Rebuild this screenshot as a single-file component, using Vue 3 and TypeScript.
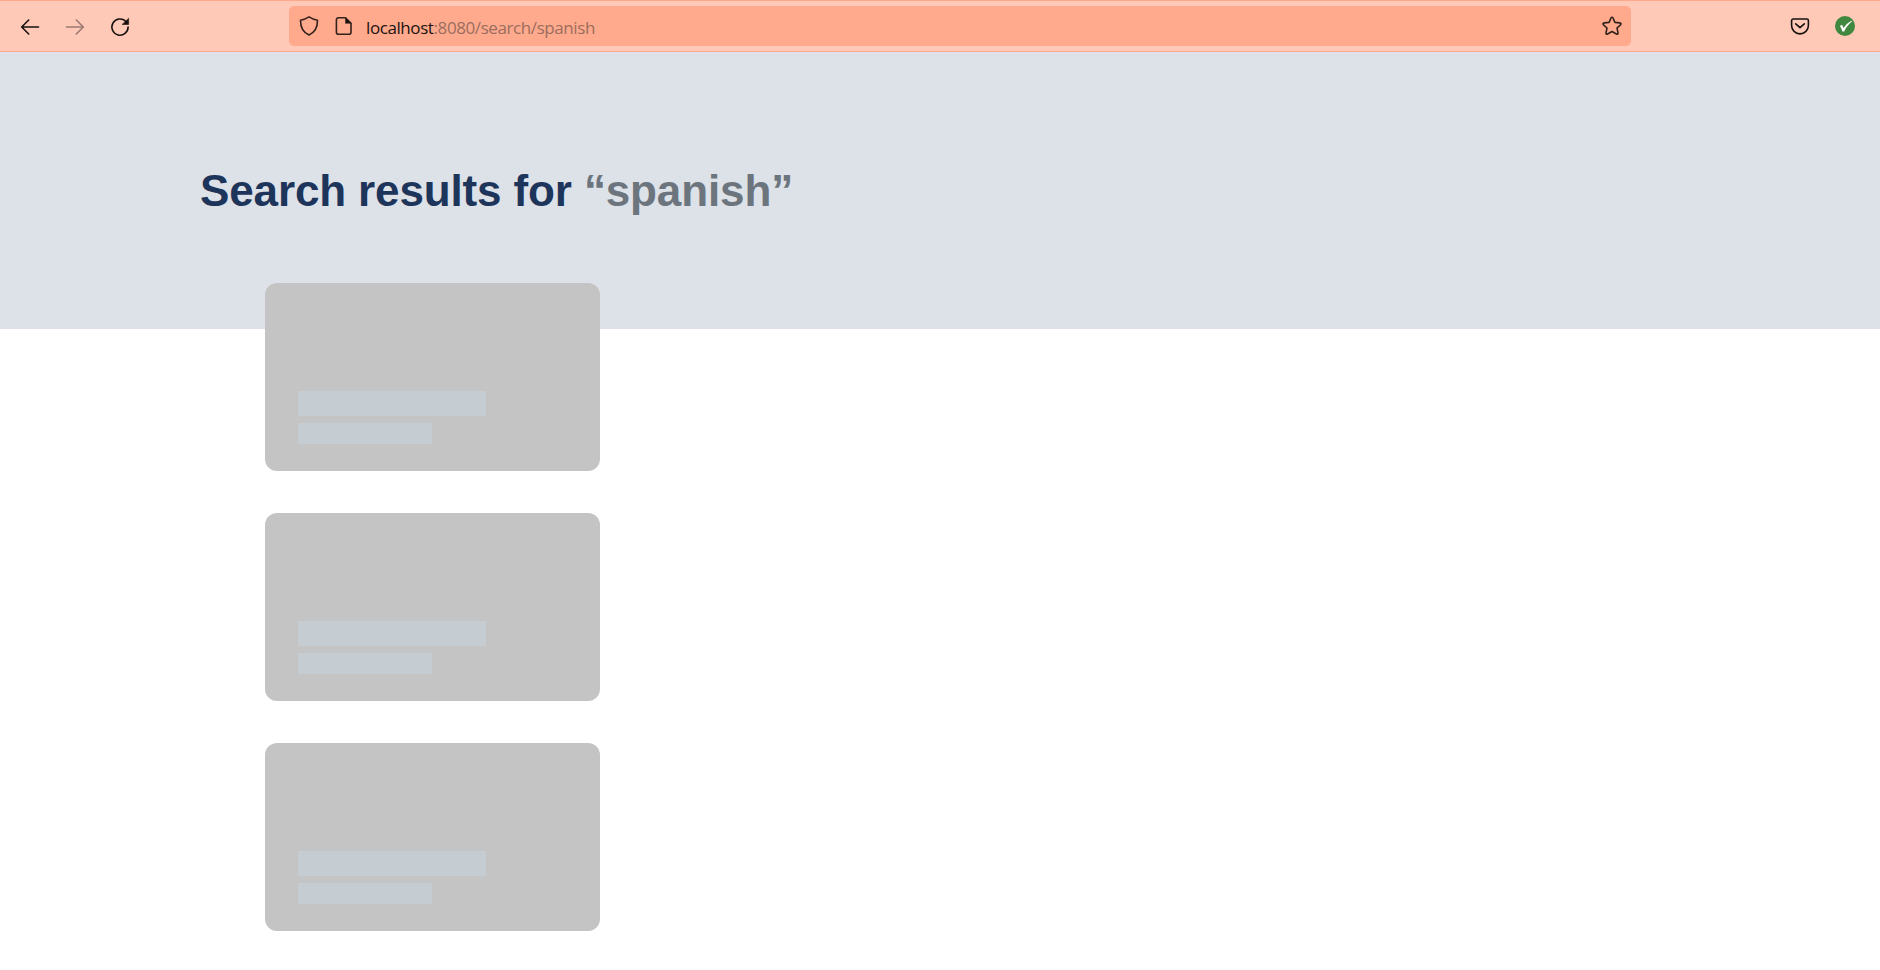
<script setup lang="ts">
const query: string = 'spanish'
const placeholders: number[] = [1, 2, 3]
</script>

<template>
  <div class="window">
    <header class="toolbar">
      <nav class="nav">
        <svg class="icon" viewBox="0 0 20 20"><path d="M18.5 10H2M8.7 3L1.7 10l7 7" /></svg>
        <svg class="icon faded" viewBox="0 0 20 20"><path d="M1.5 10H18M11.3 3l7 7-7 7" /></svg>
        <svg class="icon" viewBox="0 0 20 20">
          <path d="M18.1 10A8.1 8.1 0 1 1 15.6 4.2" />
          <path class="solid" d="M18.6 1.6V7.5H12.4Z" />
        </svg>
      </nav>
      <div class="urlbar">
        <svg class="icon soft" viewBox="0 0 20 20">
          <path d="M10 .9C12.4 2.5 15.2 3.6 18.5 4.2C18.6 11 16.2 16.4 10 19.1C3.8 16.4 1.4 11 1.5 4.2C4.8 3.6 7.6 2.5 10 .9Z" />
        </svg>
        <svg class="icon soft page" viewBox="0 0 20 20">
          <path d="M11.5 1.8H4.4A2 2 0 0 0 2.4 3.8V16.2A2 2 0 0 0 4.4 18.2H15A2 2 0 0 0 17 16.2V7.3Z" />
          <path class="solid" d="M11.5 1.8V7.3H17Z" />
        </svg>
        <span class="address"><span class="host">localhost</span>:8080/search/{{ query }}</span>
        <svg class="icon soft star" viewBox="0 0 20 20">
          <path d="M10 1.2C10.6 1.2 10.8 1.6 11 2L12.9 6.4L17.8 6.9C19 7.1 19.3 8 18.5 8.8L15 12L16 16.8C16.2 18 15.4 18.6 14.4 18L10 15.5L5.6 18C4.6 18.6 3.8 18 4 16.8L5 12L1.5 8.8C.7 8 1 7.1 2.2 6.9L7.1 6.4L9 2C9.2 1.6 9.4 1.2 10 1.2Z" />
        </svg>
      </div>
      <div class="tools">
        <svg class="icon" viewBox="0 0 20 20">
          <path d="M3.2 3H16.8A1.6 1.6 0 0 1 18.4 4.6V9.5A8.4 8.4 0 0 1 1.6 9.5V4.6A1.6 1.6 0 0 1 3.2 3Z" />
          <path d="M5.7 7.8L10 11.7L14.3 7.8" />
        </svg>
        <svg class="icon" viewBox="0 0 20 20">
          <circle class="badge" cx="10" cy="10" r="10" />
          <path class="check" d="M4.9 10L7 8.7L8.6 12.1C10.6 9 13.2 6.4 16.6 4.8L17 5.6C13.6 8.2 11 11.4 9.2 15.4H7.3C6.7 13.2 6 11.6 4.9 10Z" />
        </svg>
      </div>
    </header>
    <section class="banner">
      <h1>Search results for <span class="query">“{{ query }}”</span></h1>
    </section>
    <main class="results">
      <article v-for="item in placeholders" :key="item" class="card">
        <div class="line title"></div>
        <div class="line subtitle"></div>
      </article>
    </main>
  </div>
</template>

<style>
body {
  margin: 0;
  background: #fff;
}
</style>

<style scoped>
.window {
  height: 970px;
  overflow: hidden;
  background: #fff;
}
.toolbar {
  box-sizing: border-box;
  display: flex;
  align-items: center;
  height: 52px;
  background: #ffc9b7;
  border-top: 1px solid #ffa98c;
  border-bottom: 1px solid #ffa98c;
}
.nav {
  display: flex;
  gap: 25px;
  box-sizing: border-box;
  width: 289px;
  padding-left: 20px;
  padding-top: 1px;
}
.icon {
  flex: none;
  width: 20px;
  height: 20px;
  fill: none;
  stroke: #17110f;
  stroke-width: 1.6;
  stroke-linecap: round;
  stroke-linejoin: round;
}
.faded {
  opacity: 0.42;
}
.soft {
  stroke: #33221c;
}
.solid {
  fill: #17110f;
  stroke-width: 0.6;
}
.badge {
  fill: #40883f;
  stroke: none;
}
.check {
  fill: #fff;
  stroke: none;
}
.urlbar {
  box-sizing: border-box;
  display: flex;
  align-items: center;
  width: 1342px;
  height: 40px;
  padding: 0 9px 0 10px;
  border-radius: 5px;
  background: #ffaa8d;
}
.page {
  margin-left: 15px;
}
.address {
  margin: 3px 0 0 12px;
  font: 17px/24px "Open Sans", "Noto Sans", sans-serif;
  letter-spacing: -0.41px;
  color: #9b6d5e;
  white-space: nowrap;
}
.host {
  color: #1b1310;
}
.star {
  margin-left: auto;
}
.tools {
  display: flex;
  gap: 25px;
  margin-left: 159px;
}
.banner {
  box-sizing: border-box;
  height: 277px;
  padding: 113px 200px 0;
  background: #dde1e8;
}
h1 {
  margin: 0;
  font: bold 44px/52px "Liberation Sans", Arial, sans-serif;
  letter-spacing: -0.13px;
  color: #1d355a;
}
.query {
  color: #6c757d;
}
.results {
  display: flex;
  flex-direction: column;
  gap: 42px;
  margin: -46px 0 0 265px;
}
.card {
  position: relative;
  box-sizing: border-box;
  display: flex;
  flex: none;
  flex-direction: column;
  gap: 7px;
  width: 335px;
  height: 188px;
  padding: 108px 33px 0;
  border-radius: 12px;
  background: #c4c4c4;
}
.line {
  background: #c5cdd2;
}
.title {
  width: 188px;
  height: 25px;
}
.subtitle {
  width: 134px;
  height: 21px;
}
</style>
